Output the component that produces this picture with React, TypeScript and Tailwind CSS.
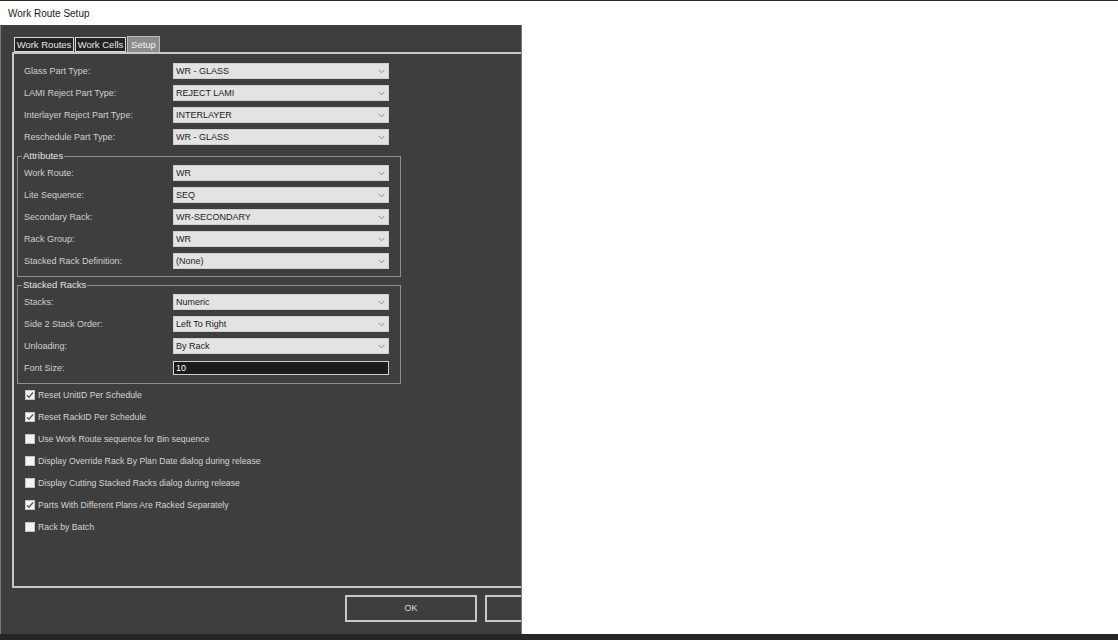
import React from "react";

const font = { fontFamily: '"Liberation Sans", Arial, sans-serif' };

const topRows: [string, string][] = [
  ["Glass Part Type:", "WR - GLASS"],
  ["LAMI Reject Part Type:", "REJECT LAMI"],
  ["Interlayer Reject Part Type:", "INTERLAYER"],
  ["Reschedule Part Type:", "WR - GLASS"],
];

const attributeRows: [string, string][] = [
  ["Work Route:", "WR"],
  ["Lite Sequence:", "SEQ"],
  ["Secondary Rack:", "WR-SECONDARY"],
  ["Rack Group:", "WR"],
  ["Stacked Rack Definition:", "(None)"],
];

const stackedRows: [string, string][] = [
  ["Stacks:", "Numeric"],
  ["Side 2 Stack Order:", "Left To Right"],
  ["Unloading:", "By Rack"],
];

const checks: [string, boolean][] = [
  ["Reset UnitID Per Schedule", true],
  ["Reset RackID Per Schedule", true],
  ["Use Work Route sequence for Bin sequence", false],
  ["Display Override Rack By Plan Date dialog during release", false],
  ["Display Cutting Stacked Racks dialog during release", false],
  ["Parts With Different Plans Are Racked Separately", true],
  ["Rack by Batch", false],
];

const Combo = ({ value }: { value: string }) => (
  <div className="flex h-[16px] w-[216px] items-center justify-between border border-[#cfcfcf] bg-[#e3e3e3] pl-[2px] pr-[3px]">
    <span className="text-[9px] leading-none text-[#1c1c1c]">{value}</span>
    <svg width="7" height="5" viewBox="0 0 7 5">
      <polyline points="0.5,0.8 3.5,3.8 6.5,0.8" fill="none" stroke="#8a8a8a" strokeWidth="1" />
    </svg>
  </div>
);

const Row = ({ label, value }: { label: string; value: string }) => (
  <div className="flex h-[22px] items-center">
    <span className="w-[149px] text-[9px] leading-none text-[#d0d0d0]">{label}</span>
    <Combo value={value} />
  </div>
);

const Group = ({ title, children }: { title: string; children: React.ReactNode }) => (
  <div className="relative ml-[3px] w-[384px] border border-[#8f8f8f] pb-[4px] pl-[6px] pt-[5px]">
    <span className="absolute left-[4px] top-[-6px] bg-[#3e3e3e] px-[1px] text-[9.5px] leading-none text-[#e2e2e2]">
      {title}
    </span>
    {children}
  </div>
);

const CheckBox = ({ label, checked }: { label: string; checked: boolean }) => (
  <div className="flex h-[22px] items-center gap-[3px] pl-[11px]">
    <div className="flex h-[10px] w-[10px] items-center justify-center border border-[#c4c4c4] bg-[#f2f2f2]">
      {checked && (
        <svg width="8" height="8" viewBox="0 0 8 8">
          <polyline points="1,4.2 3,6.2 7,1.5" fill="none" stroke="#555555" strokeWidth="1.3" />
        </svg>
      )}
    </div>
    <span className="text-[8.7px] leading-none text-[#d4d4d4]">{label}</span>
  </div>
);

export default function App() {
  return (
    <div className="flex h-[640px] w-[1118px] flex-col overflow-hidden bg-white" style={font}>
      <div className="h-[1px] bg-[#2a2a2a]" />
      <div className="flex h-[24px] items-center bg-white pl-[8px] text-[10px] text-[#1a1a1a]">
        Work Route Setup
      </div>

      <div className="flex flex-1">
        <div className="flex w-[522px] flex-col overflow-hidden border-l border-r border-[#7a7a7a] bg-[#3e3e3e]">
          {/* Tabs */}
          <div className="ml-[13px] mt-[11px] flex items-start">
            <div className="mt-[1px] flex h-[15px] w-[60px] items-center justify-center border border-[#d6d6d6] bg-[#222222] text-[9.5px] leading-none text-[#e6e6e6]">
              Work Routes
            </div>
            <div className="ml-[1px] mt-[1px] flex h-[15px] w-[51px] items-center justify-center border border-[#d6d6d6] bg-[#222222] text-[9.5px] leading-none text-[#e6e6e6]">
              Work Cells
            </div>
            <div className="ml-[1px] flex h-[16px] w-[33px] items-center justify-center border border-b-0 border-[#bcbcbc] bg-[#8c8c8c] text-[9.5px] leading-none text-[#f2f2f2]">
              Setup
            </div>
          </div>

          {/* Tab page */}
          <div className="ml-[11px] h-[536px] w-[540px] shrink-0 border-2 border-[#c8c8c8] pt-[6px]">
            <div className="pl-[10px]">
              {topRows.map(([l, v]) => (
                <Row key={l + v} label={l} value={v} />
              ))}
            </div>

            <div className="mt-[8px]">
              <Group title="Attributes">
                {attributeRows.map(([l, v]) => (
                  <Row key={l} label={l} value={v} />
                ))}
              </Group>
            </div>

            <div className="mt-[8px]">
              <Group title="Stacked Racks">
                {stackedRows.map(([l, v]) => (
                  <Row key={l} label={l} value={v} />
                ))}
                <div className="flex h-[22px] items-center">
                  <span className="w-[149px] text-[9px] leading-none text-[#d0d0d0]">Font Size:</span>
                  <div className="flex h-[14px] w-[216px] items-center border border-[#d0d0d0] bg-[#1c1c1c] pl-[2px] text-[9px] leading-none text-white">
                    10
                  </div>
                </div>
              </Group>
            </div>

            <div>
              {checks.map(([l, c]) => (
                <CheckBox key={l} label={l} checked={c} />
              ))}
            </div>
          </div>

          {/* Buttons */}
          <div className="ml-[344px] mt-[7px] flex gap-[8px]">
            <button className="flex h-[27px] w-[132px] shrink-0 items-center justify-center border-2 border-[#c8c8c8] bg-[#3e3e3e] text-[9px] text-[#dcdcdc]">
              OK
            </button>
            <button
              aria-label="Cancel"
              className="h-[27px] w-[132px] shrink-0 border-2 border-[#c8c8c8] bg-[#3e3e3e]"
            />
          </div>
        </div>
        <div className="flex-1 bg-white" />
      </div>

      <div className="h-[6px] bg-[#262626]" />
    </div>
  );
}
